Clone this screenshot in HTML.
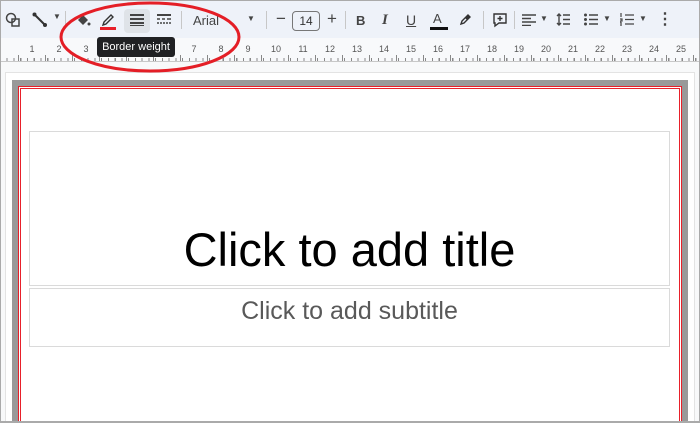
<!DOCTYPE html>
<html><head><style>
*{margin:0;padding:0;box-sizing:border-box}
html,body{width:700px;height:423px;overflow:hidden}
body{background:#f8f9fa;font-family:"Liberation Sans",Arial,sans-serif;position:relative}
.frame{position:absolute;left:0;top:0;width:700px;height:423px;border:1px solid #aaa;border-bottom:2px solid #aaa;pointer-events:none;z-index:20}
.tb{position:absolute;left:0;top:0;width:700px;height:38px;background:#eef2f9}
.ruler{position:absolute;left:0;top:38px;width:700px;height:24px;background:#f8f9fb;border-bottom:1px solid #c8c8c8}
.ic{position:absolute;top:10px;color:#444;font-size:14px}
.sep{position:absolute;top:11px;width:1px;height:18px;background:#c7c7c7}
.canvas{position:absolute;left:5px;top:72px;width:690px;height:360px;background:#fff;border:1px solid #e3e3e3}
.slide{position:absolute;left:12px;top:80px;width:676px;height:360px;background:#999}
.red{position:absolute;left:6px;top:6px;right:6px;bottom:0;border:3px double #e8202a;background:#fff}
.box{position:absolute;left:29px;width:641px;border:1px solid #dadada;text-align:center}
.tick{position:absolute;left:0;top:20px;width:700px;height:3px;background:repeating-linear-gradient(90deg,#888 0 1px,transparent 1px 6.75px)}
.tick2{position:absolute;left:18px;top:17px;width:700px;height:6px;background:repeating-linear-gradient(90deg,#888 0 1px,transparent 1px 27px)}
</style></head><body>
<div class="tb">
<svg class="ic" style="left:5px;top:12px" width="16" height="16" viewBox="0 0 16 16"><circle cx="6" cy="6" r="4.5" fill="none" stroke="#444" stroke-width="1.5"/><rect x="7" y="7" width="7" height="7" fill="none" stroke="#444" stroke-width="1.5"/></svg>
<svg class="ic" style="left:32px;top:12px" width="16" height="16"><line x1="2" y1="2" x2="13" y2="13" stroke="#333" stroke-width="2"/><circle cx="2.5" cy="2.5" r="2" fill="#333"/><circle cx="13" cy="13" r="2" fill="#333"/></svg>
<div class="ic" style="left:53px;top:12px;font-size:8px">▼</div>
<div class="sep" style="left:65px"></div>
<svg class="ic" style="left:75px;top:12px" width="16" height="16"><path d="M3 8 L8 3 L13 8 L8 13Z" fill="#444"/><circle cx="14" cy="12" r="1.5" fill="#444"/></svg>
<svg class="ic" style="left:100px;top:12px" width="16" height="16"><path d="M3 13 L4 10 L11 3 L13 5 L6 12Z" fill="none" stroke="#333" stroke-width="1.4"/></svg>
<div style="position:absolute;left:100px;top:27px;width:16px;height:3px;background:#e8202a"></div>
<div style="position:absolute;left:124px;top:9px;width:26px;height:24px;background:#dfe3e8;border-radius:4px"></div>
<svg class="ic" style="left:130px;top:14px" width="14" height="12"><rect y="0" width="14" height="2" fill="#444"/><rect y="4" width="14" height="2" fill="#444"/><rect y="8" width="14" height="2" fill="#444"/><rect y="11" width="14" height="1" fill="#444"/></svg>
<svg class="ic" style="left:157px;top:14px" width="14" height="12"><rect y="0" width="14" height="2" fill="#444"/><path d="M0 5h3M5 5h3M10 5h4M0 9h2M3 9h2M6 9h2M9 9h2M12 9h2" stroke="#444" stroke-width="1.5"/></svg>
<div class="sep" style="left:181px"></div>
<div class="ic" style="left:193px;top:13px;font-size:13px;color:#444">Arial</div>
<div class="ic" style="left:247px;top:14px;font-size:8px">▼</div>
<div class="sep" style="left:266px"></div>
<div class="ic" style="left:276px;top:9px;font-size:17px">−</div>
<div style="position:absolute;left:292px;top:11px;width:28px;height:20px;border:1px solid #777;border-radius:4px;font-size:12px;text-align:center;line-height:18px;color:#333">14</div>
<div class="ic" style="left:327px;top:9px;font-size:17px">+</div>
<div class="sep" style="left:345px"></div>
<div class="ic" style="left:356px;top:13px;font-weight:bold;font-size:13px">B</div>
<div class="ic" style="left:382px;top:12px;font-style:italic;font-family:'Liberation Serif',serif;font-size:15px;font-weight:bold">I</div>
<div class="ic" style="left:406px;top:12px;text-decoration:underline;font-size:14px">U</div>
<div class="ic" style="left:433px;top:11px;font-size:13px">A</div>
<div style="position:absolute;left:430px;top:27px;width:18px;height:3px;background:#111"></div>
<svg class="ic" style="left:459px;top:12px" width="14" height="14"><path d="M2 12 L3 9 L9 3 L11 5 L5 11Z" fill="none" stroke="#333" stroke-width="1.4"/><path d="M6 6 L9 3 L11 5 L8 8Z" fill="#333"/></svg>
<div class="sep" style="left:483px"></div>
<svg class="ic" style="left:492px;top:12px" width="16" height="16"><path d="M2 2h12v9H7l-4 3v-3H2z" fill="none" stroke="#333" stroke-width="1.4"/><path d="M8 4v5M5.5 6.5h5" stroke="#333" stroke-width="1.4"/></svg>
<div class="sep" style="left:514px"></div>
<svg class="ic" style="left:522px;top:14px" width="14" height="12"><path d="M0 1h14M0 4.5h9M0 8h14M0 11.5h9" stroke="#444" stroke-width="1.4"/></svg>
<div class="ic" style="left:540px;top:14px;font-size:8px">▼</div>
<svg class="ic" style="left:556px;top:13px" width="14" height="13"><path d="M3 1v11M1 3l2-2 2 2M1 10l2 2 2-2M7 2h7M7 6.5h7M7 11h7" stroke="#444" stroke-width="1.4" fill="none"/></svg>
<svg class="ic" style="left:584px;top:13px" width="14" height="13"><circle cx="1.5" cy="2" r="1.5" fill="#444"/><circle cx="1.5" cy="6.5" r="1.5" fill="#444"/><circle cx="1.5" cy="11" r="1.5" fill="#444"/><path d="M5 2h9M5 6.5h9M5 11h9" stroke="#444" stroke-width="1.4"/></svg>
<div class="ic" style="left:603px;top:14px;font-size:8px">▼</div>
<svg class="ic" style="left:620px;top:13px" width="14" height="13"><path d="M1 0v4M0 6h2v2H0v2h2M0 12h2M5 2h9M5 6.5h9M5 11h9" stroke="#444" stroke-width="1.2" fill="none"/></svg>
<div class="ic" style="left:639px;top:14px;font-size:8px">▼</div>
<div class="ic" style="left:657px;top:9px;font-size:16px;font-weight:bold">⋮</div>
</div>
<div class="ruler">
<div class="tick"></div><div class="tick2"></div>
<svg width="700" height="24" style="position:absolute;left:0;top:0">
<g font-size="9" fill="#555" font-family="Liberation Sans,sans-serif" text-anchor="middle">
<text x="32" y="14">1</text><text x="59" y="14">2</text><text x="86" y="14">3</text><text x="113" y="14">4</text><text x="140" y="14">5</text><text x="167" y="14">6</text><text x="194" y="14">7</text><text x="221" y="14">8</text><text x="248" y="14">9</text><text x="276" y="14">10</text><text x="303" y="14">11</text><text x="330" y="14">12</text><text x="357" y="14">13</text><text x="384" y="14">14</text><text x="411" y="14">15</text><text x="438" y="14">16</text><text x="465" y="14">17</text><text x="492" y="14">18</text><text x="519" y="14">19</text><text x="546" y="14">20</text><text x="573" y="14">21</text><text x="600" y="14">22</text><text x="627" y="14">23</text><text x="654" y="14">24</text><text x="681" y="14">25</text>
</g>
</svg>
</div>
<div class="canvas"></div>
<div class="slide"><div class="red"></div></div>
<div class="box" style="top:131px;height:155px;font-size:47px;line-height:47px;padding-top:94px;color:#000">Click to add title</div>
<div class="box" style="top:288px;height:59px;font-size:25px;line-height:25px;padding-top:10px;color:#595959">Click to add subtitle</div>
<div style="position:absolute;left:97px;top:37px;width:78px;height:20px;background:#202124;color:#fff;font-size:11px;line-height:20px;text-align:center;border-radius:3px;z-index:10">Border weight</div>
<svg style="position:absolute;left:0;top:0;z-index:11" width="700" height="100"><ellipse cx="150" cy="37" rx="89" ry="34" fill="none" stroke="#e41e26" stroke-width="3"/></svg>
<div class="frame"></div>
</body></html>
